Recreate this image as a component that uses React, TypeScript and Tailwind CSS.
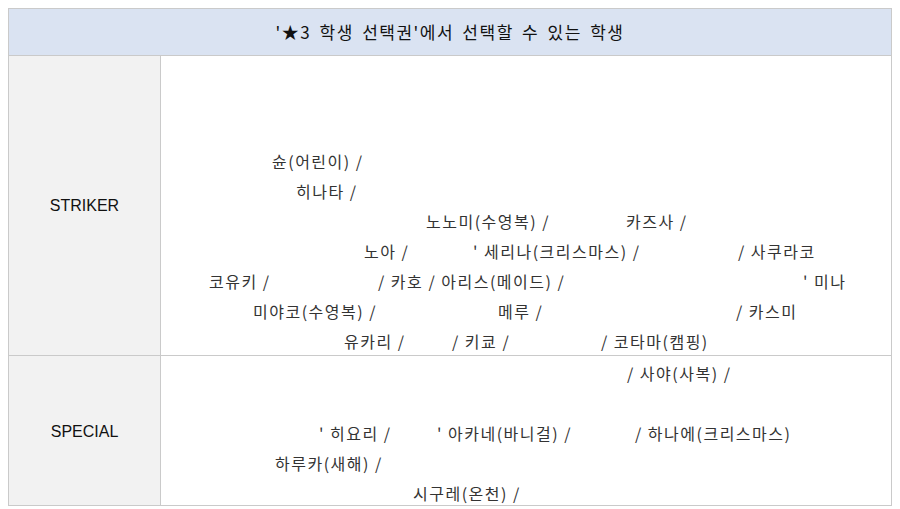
const kr = "font-['Noto_Sans_CJK_KR','Noto_Sans',sans-serif]";

type Item = { text: string; pos: string };

const striker: Item[][] = [
  [{ text: "슌(어린이) /", pos: "left-[111px]" }],
  [{ text: "히나타 /", pos: "left-[135px]" }],
  [
    { text: "노노미(수영복) /", pos: "left-[265px]" },
    { text: "카즈사 /", pos: "left-[465px]" },
  ],
  [
    { text: "노아 /", pos: "left-[203px]" },
    { text: "' 세리나(크리스마스) /", pos: "left-[312px]" },
    { text: "/ 사쿠라코", pos: "left-[577px]" },
  ],
  [
    { text: "코유키 /", pos: "left-[48px]" },
    { text: "/ 카호 / 아리스(메이드) /", pos: "left-[217px]" },
    { text: "' 미나", pos: "left-[642px]" },
  ],
  [
    { text: "미야코(수영복) /", pos: "left-[92px]" },
    { text: "메루 /", pos: "left-[337px]" },
    { text: "/ 카스미", pos: "left-[575px]" },
  ],
  [
    { text: "유카리 /", pos: "left-[183px]" },
    { text: "/ 키쿄 /", pos: "left-[291px]" },
    { text: "/ 코타마(캠핑)", pos: "left-[440px]" },
  ],
];

const special: Item[][] = [
  [{ text: "/ 사야(사복) /", pos: "left-[466px]" }],
  [],
  [
    { text: "' 히요리 /", pos: "left-[158px]" },
    { text: "' 아카네(바니걸) /", pos: "left-[276px]" },
    { text: "/ 하나에(크리스마스)", pos: "left-[474px]" },
  ],
  [{ text: "하루카(새해) /", pos: "left-[114px]" }],
  [{ text: "시구레(온천) /", pos: "left-[252px]" }],
];

function Lines({ lines }: { lines: Item[][] }) {
  return (
    <>
      {lines.map((line, i) => (
        <div key={i} className="relative h-[30px]">
          {line.map((it) => (
            <span
              key={it.text}
              className={`absolute top-0 ${it.pos} whitespace-pre leading-[30px]`}
            >
              {it.text}
            </span>
          ))}
        </div>
      ))}
    </>
  );
}

export default function App() {
  return (
    <div className="w-[900px] h-[509px] bg-white p-2">
      <div
        className={`grid grid-cols-[152px_1fr] border border-[#cacaca] text-[16px] tracking-[1.5px] text-[#333] ${kr}`}
      >
        <div className="col-span-2 h-[47px] flex items-center justify-center bg-[#dae3f2] border-b border-[#cacaca] text-[17px] text-[#111] tracking-[1.5px] [word-spacing:3px]">
          '★3 학생 선택권'에서 선택할 수 있는 학생
        </div>

        <div className="h-[300px] flex items-center justify-center bg-[#f2f2f2] border-b border-r border-[#cacaca] font-['Liberation_Sans',sans-serif] text-[16px] tracking-normal text-[#111]">
          STRIKER
        </div>
        <div className="h-[300px] pt-[90px] border-b border-[#cacaca]">
          <Lines lines={striker} />
        </div>

        <div className="h-[149px] pt-[2px] flex items-center justify-center bg-[#f2f2f2] border-r border-[#cacaca] font-['Liberation_Sans',sans-serif] text-[16px] tracking-normal text-[#111]">
          SPECIAL
        </div>
        <div className="h-[149px] pt-[2px]">
          <Lines lines={special} />
        </div>
      </div>
    </div>
  );
}
